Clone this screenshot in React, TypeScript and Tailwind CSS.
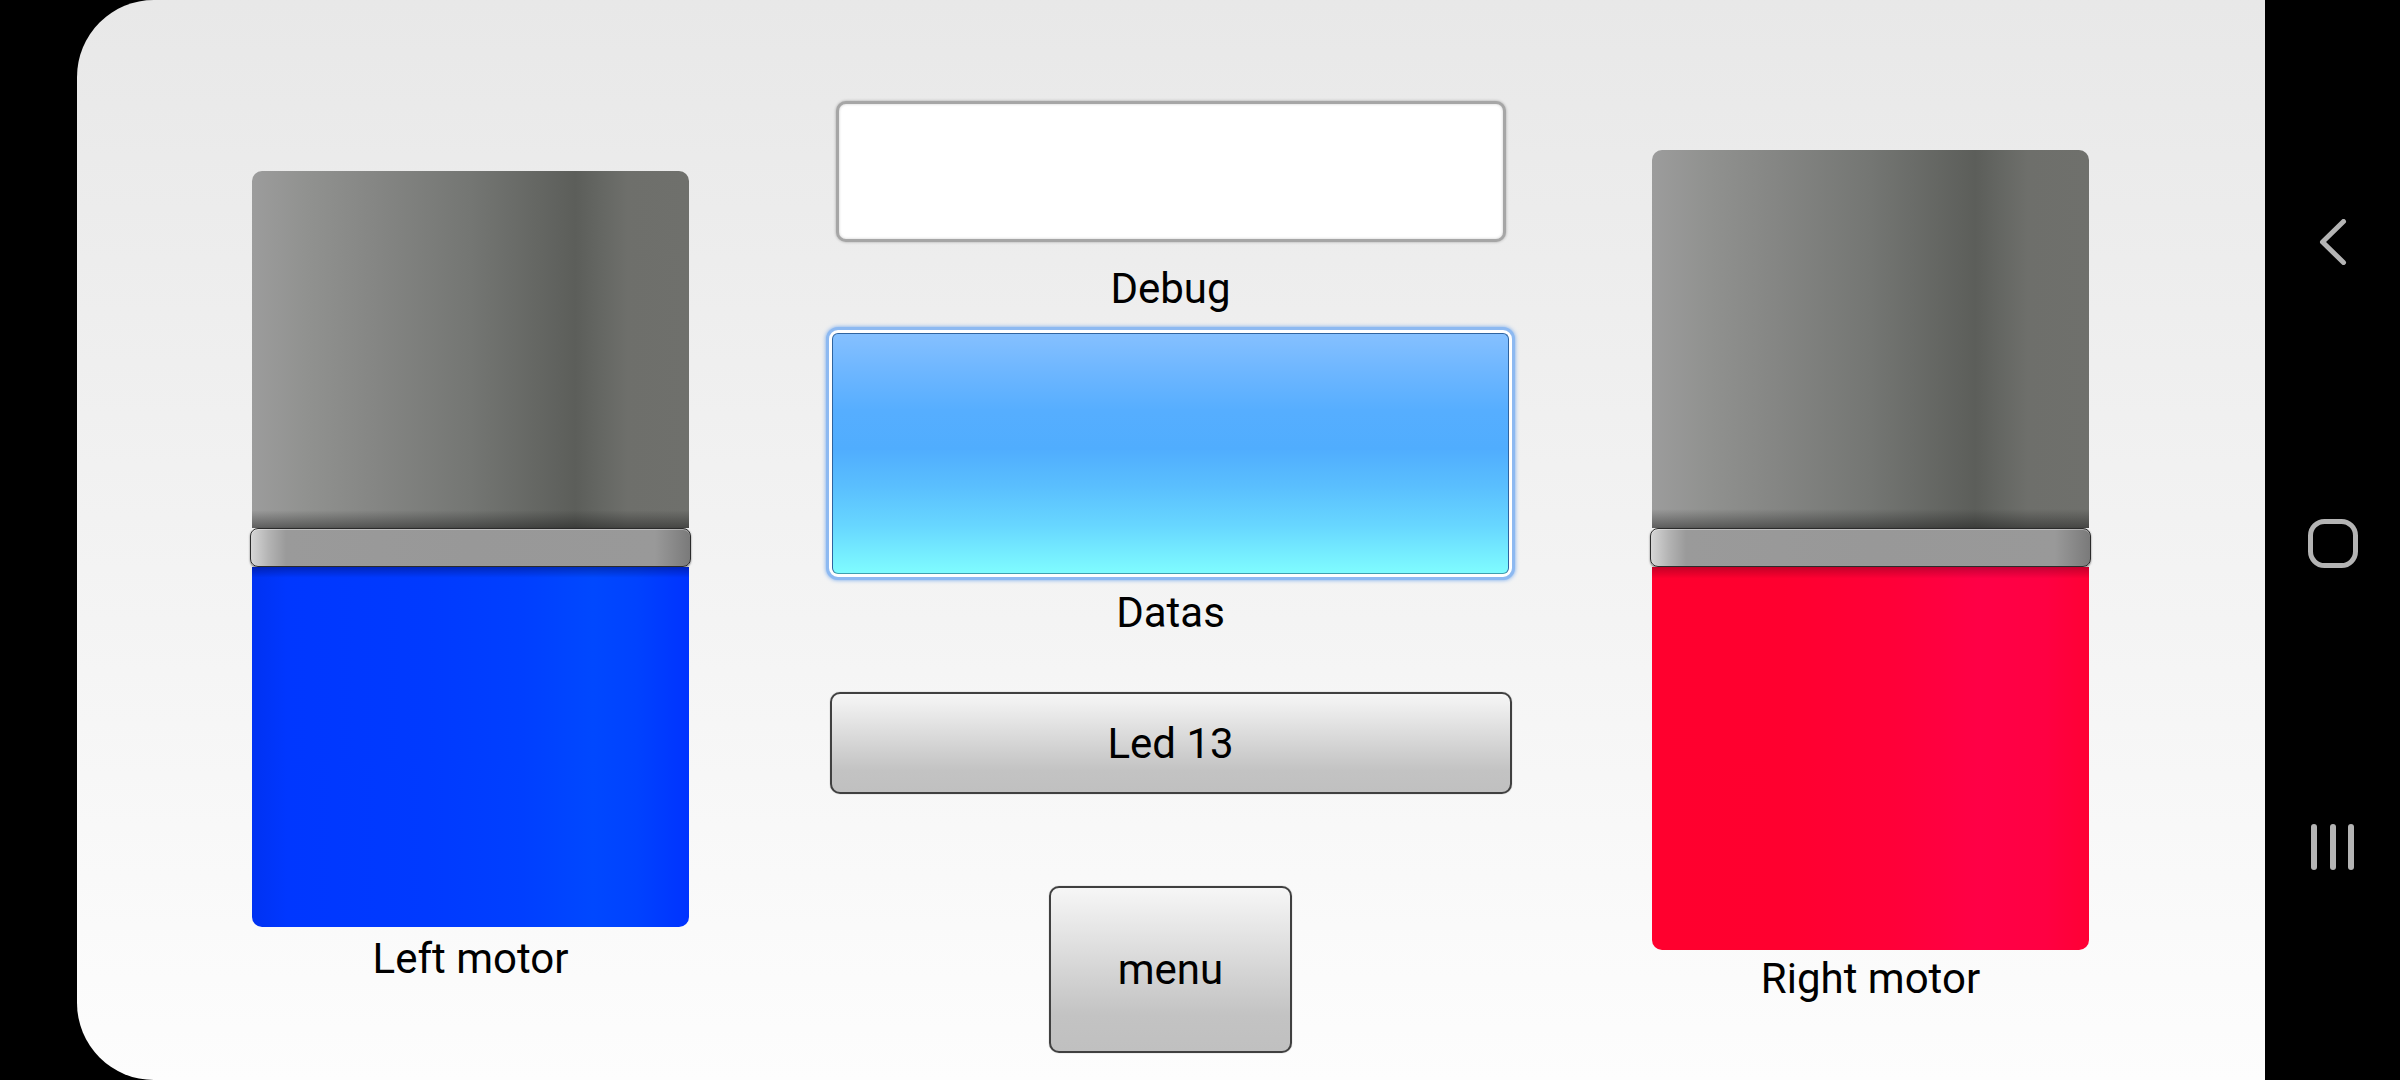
import React from 'react'

const labelClass = "font-['Roboto',sans-serif] text-[42px] leading-[49px] text-black text-center"

function MotorSlider({ trackHeight, upperHeight, fill, label, labelGap }: {
  trackHeight: string
  upperHeight: string
  fill: 'blue' | 'red'
  label: string
  labelGap: string
}) {
  return (
    <div className="flex w-[437px] flex-col">
      {/* Track */}
      <div className={`flex w-full flex-col ${trackHeight}`}>
        <div
          className={`${upperHeight} w-full rounded-t-[10px] bg-[linear-gradient(to_bottom,transparent_95%,rgba(20,20,20,0.45)_100%),linear-gradient(to_right,#9c9c9c_0%,#919290_12%,#858684_28%,#747673_50%,#5c5e5a_74%,#656763_80%,#6e6f6b_86%,#6f706c_100%)]`}
        />
        {/* Thumb */}
        <div className="-mx-[2px] h-[39px] shrink-0 rounded-[8px] border border-[#2b2b2b] bg-[linear-gradient(to_right,#d6d6d6_0%,#b4b4b4_4%,#9a9a9a_8%,#989898_50%,#999999_92%,#8a8a8a_96%,#7a7a7a_100%)] shadow-[inset_0_1px_0_rgba(255,255,255,0.35),0_1px_2px_rgba(0,0,0,0.55)]" />
        {fill === 'blue' ? (
          <div className="w-full flex-1 rounded-b-[10px] bg-[linear-gradient(to_bottom,rgba(0,0,60,0.35)_0%,transparent_3%),linear-gradient(to_right,#0032f2_0%,#0037ff_8%,#003aff_40%,#003fff_62%,#0048ff_78%,#0042ff_88%,#0033ff_100%)]" />
        ) : (
          <div className="w-full flex-1 rounded-b-[10px] bg-[linear-gradient(to_bottom,rgba(60,0,20,0.3)_0%,transparent_3%),linear-gradient(to_right,#ff002e_0%,#ff002f_30%,#ff0038_55%,#ff0046_75%,#ff0042_90%,#ff0034_100%)]" />
        )}
      </div>
      <div className={`${labelGap} ${labelClass}`}>{label}</div>
    </div>
  )
}

function GreyButton({ label, className }: { label: string; className: string }) {
  return (
    <button
      className={`flex items-center justify-center self-center rounded-[10px] border-2 border-[#404040] bg-[linear-gradient(to_bottom,#f6f6f6_0%,#e6e6e6_25%,#d2d2d2_55%,#c3c3c3_78%,#c0c0c0_100%)] shadow-[0_0_1px_rgba(0,0,0,0.5)] ${labelClass} ${className}`}
    >
      {label}
    </button>
  )
}

function NavBar() {
  return (
    <div className="flex h-full w-[135px] flex-col items-center bg-black pt-[219px]">
      {/* Back */}
      <svg width="30" height="46" viewBox="0 0 30 46" fill="none">
        <polyline points="25.5,2.5 4.5,23 25.5,43.5" stroke="#b4b4b4" strokeWidth="5" strokeLinecap="round" strokeLinejoin="round" />
      </svg>
      {/* Home */}
      <svg className="mt-[254px]" width="50" height="50" viewBox="0 0 50 50" fill="none">
        <rect x="2.5" y="2.5" width="45" height="44" rx="14" stroke="#b4b4b4" strokeWidth="5" />
      </svg>
      {/* Recents */}
      <svg className="mt-[255px]" width="44" height="46" viewBox="0 0 44 46" fill="none">
        <line x1="3" y1="3" x2="3" y2="43" stroke="#b4b4b4" strokeWidth="6" strokeLinecap="round" />
        <line x1="22" y1="3" x2="22" y2="43" stroke="#b4b4b4" strokeWidth="6" strokeLinecap="round" />
        <line x1="40" y1="3" x2="40" y2="43" stroke="#b4b4b4" strokeWidth="6" strokeLinecap="round" />
      </svg>
    </div>
  )
}

export default function App() {
  return (
    <div className="flex h-[1080px] w-[2400px] overflow-hidden bg-black">
      {/* App surface */}
      <div className="ml-[77px] flex h-full w-[2188px] items-start rounded-l-[77px] bg-linear-to-b from-[#e8e8e8] to-[#fdfdfd] pl-[175px]">
        {/* Left motor */}
        <div className="pt-[171px]">
          <MotorSlider trackHeight="h-[756px]" upperHeight="h-[357px]" fill="blue" label="Left motor" labelGap="mt-[7px]" />
        </div>

        {/* Center column */}
        <div className="ml-[137px] flex w-[689px] flex-col pt-[101px]">
          <div className="h-[141px] w-[670px] self-center rounded-[10px] border-[3px] border-[#a6a6a6] bg-white shadow-[0_0_3px_rgba(0,0,0,0.3),inset_0_0_3px_rgba(0,0,0,0.2)]" />
          <div className={`mt-[22px] ${labelClass}`}>Debug</div>

          <div className="mt-[14px] h-[253px] w-full rounded-[12px] border-[3px] border-[#8db9f1] bg-white p-[3px] shadow-[0_0_4px_#6fa6ee]">
            <div className="h-full w-full rounded-[6px] border border-[#2f64a0] border-b-[#3f9fb0] bg-[linear-gradient(to_bottom,#85c0ff_0%,#6db6ff_16%,#56aeff_32%,#50adfe_48%,#5abffe_64%,#67d6ff_80%,#7ffcff_100%)]" />
          </div>
          <div className={`mt-[8px] ${labelClass}`}>Datas</div>

          <GreyButton label="Led 13" className="mt-[55px] h-[102px] w-[682px]" />
          <GreyButton label="menu" className="mt-[92px] h-[167px] w-[243px]" />
        </div>

        {/* Right motor */}
        <div className="ml-[137px] pt-[150px]">
          <MotorSlider trackHeight="h-[800px]" upperHeight="h-[378px]" fill="red" label="Right motor" labelGap="mt-[4px]" />
        </div>
      </div>

      <NavBar />
    </div>
  )
}
